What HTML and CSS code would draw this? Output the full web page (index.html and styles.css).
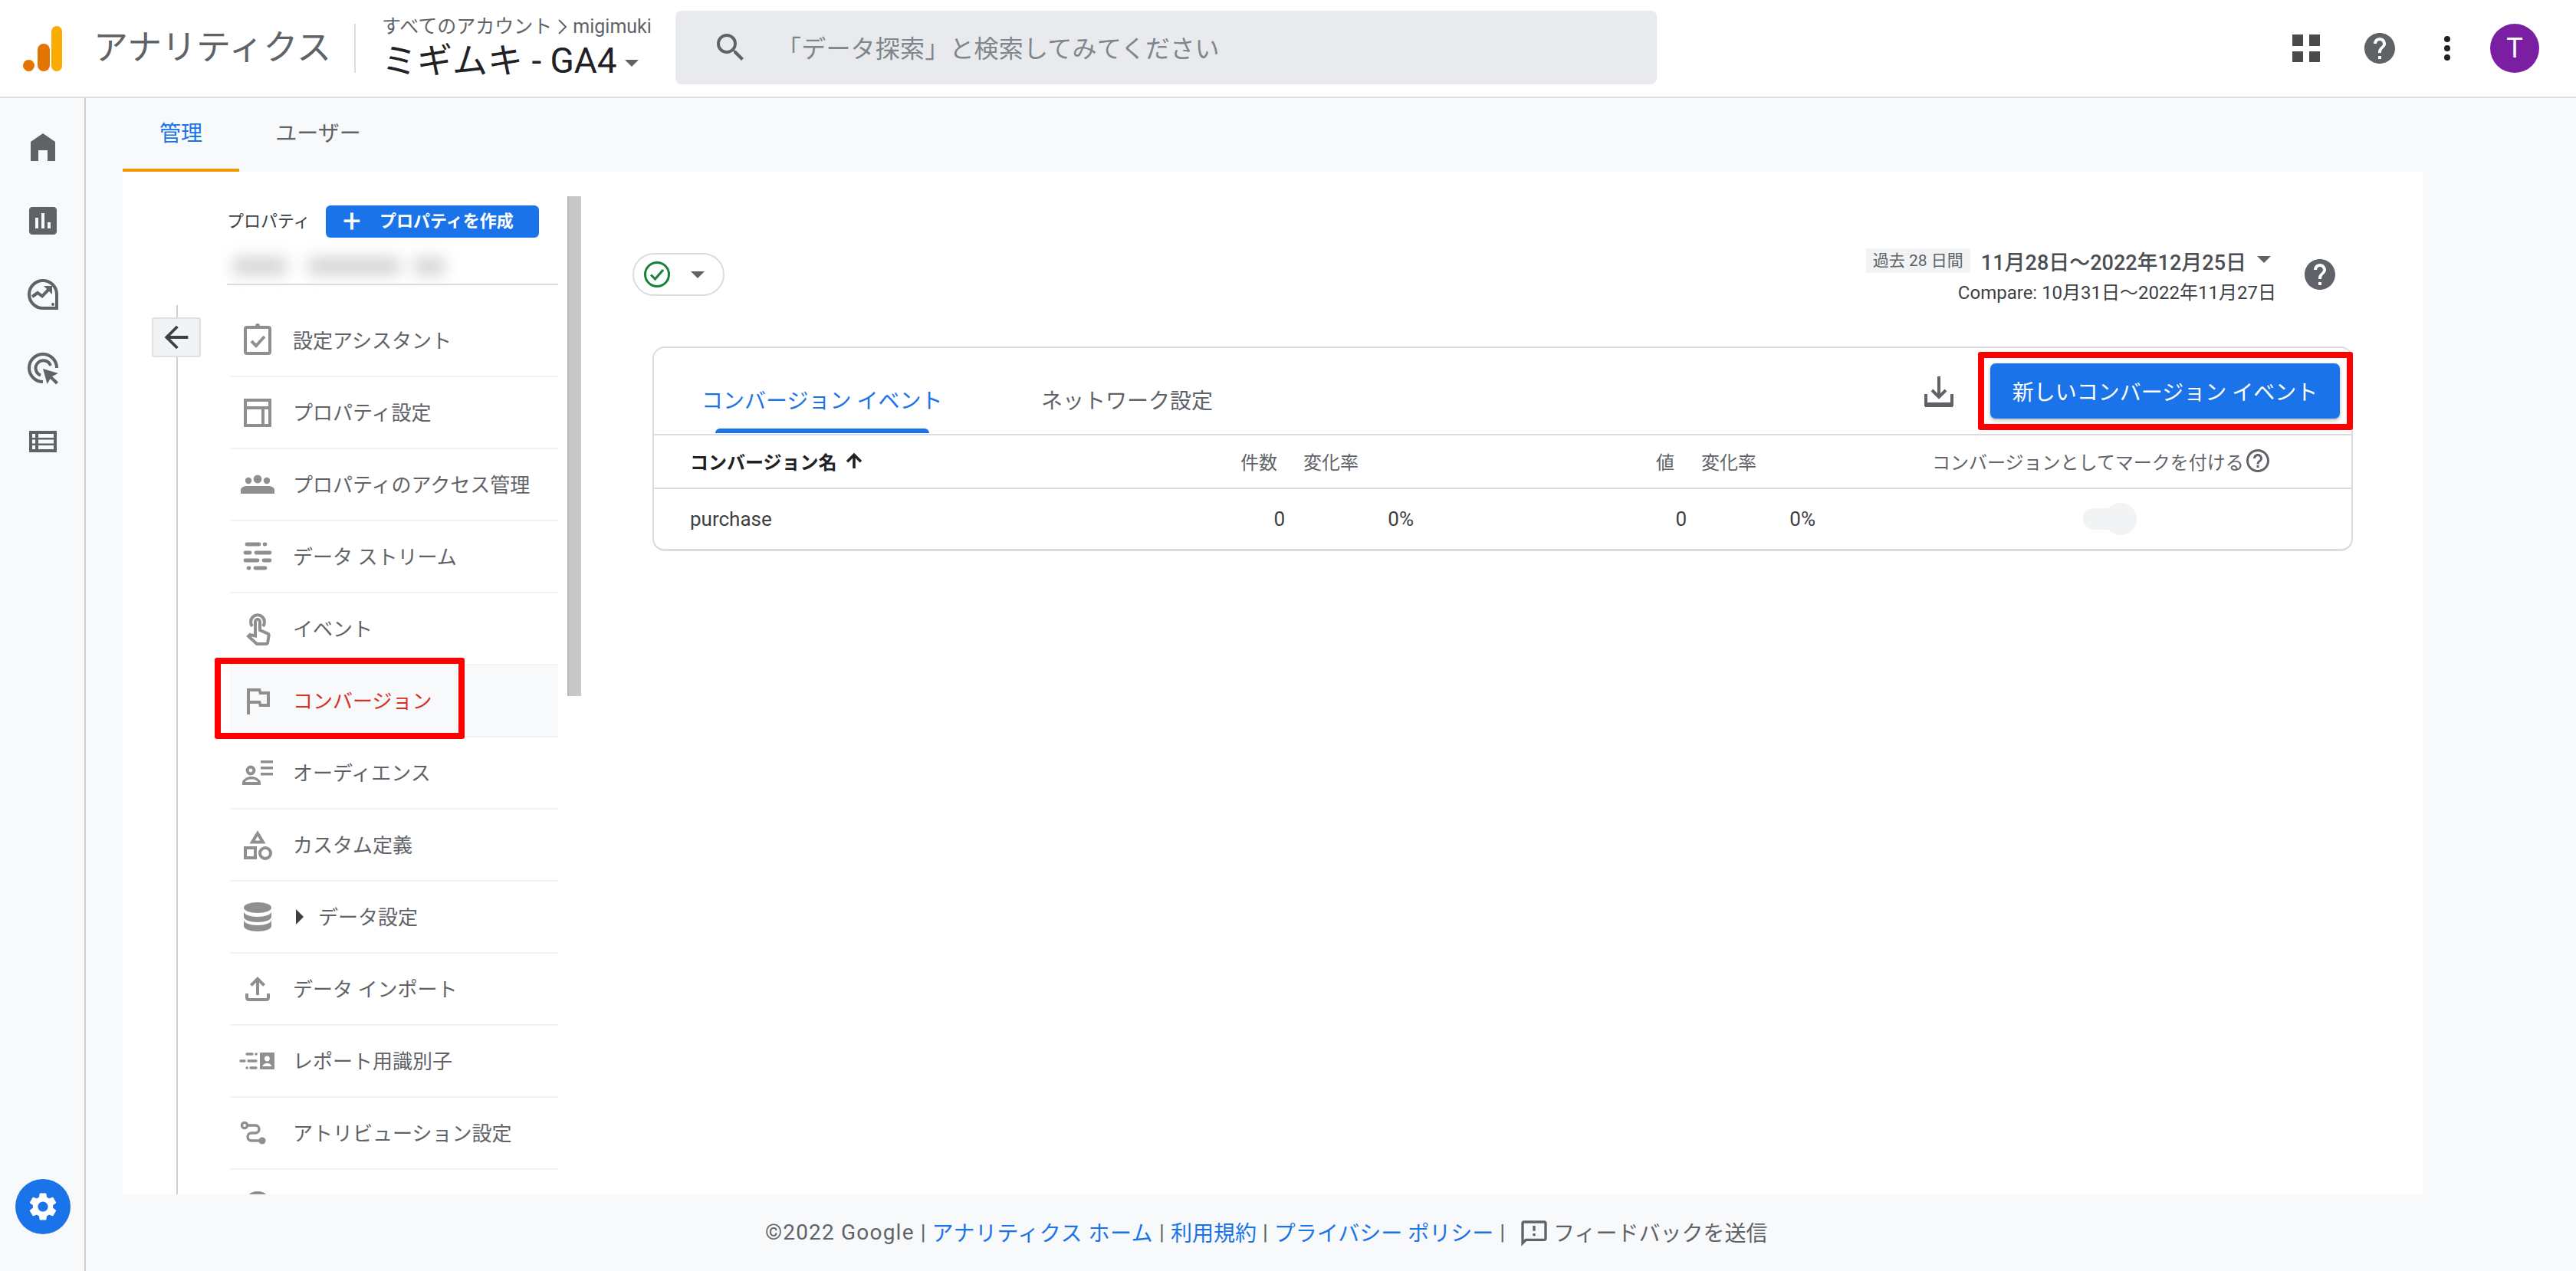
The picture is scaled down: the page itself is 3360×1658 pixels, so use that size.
FILE: index.html
```html
<!DOCTYPE html>
<html lang="ja">
<head>
  <meta charset="UTF-8">
  <meta name="viewport" content="width=device-width, initial-scale=1.0">
  <title>アナリティクス</title>
  <link rel="stylesheet" href="styles.css">
</head>
<body>

  <svg class="defs" width="0" height="0">
    <symbol id="help" viewBox="0 0 24 24"><path d="M12 2C6.48 2 2 6.48 2 12s4.48 10 10 10 10-4.48 10-10S17.52 2 12 2zm1 17h-2v-2h2v2zm2.07-7.75l-.9.92C13.45 12.9 13 13.5 13 15h-2v-.5c0-1.1.45-2.1 1.17-2.83l1.24-1.26c.37-.36.59-.86.59-1.41 0-1.1-.9-2-2-2s-2 .9-2 2H8c0-2.21 1.79-4 4-4s4 1.79 4 4c0 .88-.36 1.68-.93 2.25z"/></symbol>
  </svg>

  <header class="topbar">
    <div class="brand">
      <svg class="logo" width="51" height="59" viewBox="0 0 51 59">
        <circle cx="7.5" cy="51.5" r="7.5" fill="#e37400"/>
        <rect x="19" y="23" width="16" height="36" rx="8" fill="#e37400"/>
        <rect x="37" y="0" width="14" height="59" rx="7" fill="#f9ab00"/>
      </svg>
      <span class="brand-name">アナリティクス</span>
    </div>
    <div class="divider"></div>
    <div class="account">
      <div class="crumb">
        <span>すべてのアカウント</span>
        <svg class="crumb-sep" width="14" height="22" viewBox="0 0 14 22" fill="none" stroke="#5f6368" stroke-width="2"><path d="M2 2l9 9-9 9"/></svg>
        <span>migimuki</span>
      </div>
      <div class="property">ミギムキ - GA4<span class="caret caret-title"></span></div>
    </div>
    <div class="search">
      <svg class="search-icon" width="48" height="48" viewBox="0 0 24 24" fill="#5f6368"><path d="M15.5 14h-.79l-.28-.27A6.47 6.47 0 0 0 16 9.5 6.5 6.5 0 1 0 9.5 16c1.61 0 3.09-.59 4.23-1.57l.27.28v.79l5 4.99L20.49 19l-4.99-5zm-6 0C7.01 14 5 11.99 5 9.5S7.01 5 9.5 5 14 7.01 14 9.5 11.99 14 9.5 14z"/></svg>
      <span class="search-text">「データ探索」と検索してみてください</span>
    </div>
    <div class="top-actions">
      <svg class="apps" width="36" height="36" viewBox="0 0 36 36" fill="#4a4a4a">
        <rect width="14" height="15"/><rect x="22" width="14" height="15"/><rect y="22" width="14" height="14"/><rect x="22" y="22" width="14" height="14"/>
      </svg>
      <svg class="top-help" width="48" height="48" fill="#5f6368"><use href="#help"/></svg>
      <svg class="dots" width="8" height="32" viewBox="0 0 8 32" fill="#202124">
        <circle cx="4" cy="4" r="4"/><circle cx="4" cy="16" r="4"/><circle cx="4" cy="28" r="4"/>
      </svg>
      <div class="avatar">T</div>
    </div>
  </header>

  <div class="layout">
    <aside class="rail">
      <div class="rail-icon">
        <svg width="48" height="48" viewBox="0 0 24 24"><path d="M12 3L4 8.5V21h5v-7h6v7h5V8.5z"/></svg>
      </div>
      <div class="rail-icon">
        <svg width="48" height="48" viewBox="0 0 24 24"><path d="M19 3H5c-1.1 0-2 .9-2 2v14c0 1.100.9 2 2 2h14c1.100 0 2-.9 2-2V5c0-1.100-.9-2-2-2zM9 17H7v-7h2v7zm4 0h-2V7h2v10zm4 0h-2v-4h2v4z"/></svg>
      </div>
      <div class="rail-icon">
        <svg width="48" height="48" viewBox="0 0 24 24">
          <path d="M12 3a9 9 0 1 0 0 18h9v-9a9 9 0 0 0-9-9z" class="line"/>
          <path d="M5 13.500l3.500-2.500 3 2.200 5-5.200" class="line"/>
          <path d="M12.500 6.500h5.500V12z"/>
          <circle cx="18.500" cy="18.500" r="1"/>
        </svg>
      </div>
      <div class="rail-icon">
        <svg width="48" height="48" viewBox="0 0 24 24">
          <path d="M21 12a9 9 0 1 0-9 9" class="line"/>
          <path d="M17 10.500a5 5 0 1 0-6.500 6.300" class="line"/>
          <path d="M12 12.500l10 3-4 2 4 3.700-1.500 1.500-3.700-3.700-2 3.500z"/>
        </svg>
      </div>
      <div class="rail-icon">
        <svg width="36" height="28" viewBox="0 0 36 28"><path fill-rule="evenodd" d="M0 0h36v28H0zM4 4v5h4V4zM12 4v5h20V4zM4 11.500v5h4v-5zM12 11.500v5h20v-5zM4 19v5h4v-5zM12 19v5h20v-5z"/></svg>
      </div>
      <div class="gear">
        <svg width="44" height="44" viewBox="0 0 24 24" fill="#fff"><path d="M19.14 12.94c.04-.3.06-.61.06-.94 0-.32-.02-.64-.07-.94l2.030-1.580a.49.49 0 0 0 .12-.61l-1.920-3.320a.488.488 0 0 0-.59-.22l-2.390.96c-.5-.38-1.030-.7-1.620-.94l-.36-2.540a.484.484 0 0 0-.48-.41h-3.840c-.24 0-.43.17-.47.41l-.36 2.540c-.59.24-1.130.57-1.620.94l-2.390-.96c-.22-.08-.47 0-.59.22L2.740 8.870c-.12.21-.08.47.12.61l2.030 1.580c-.05.3-.09.63-.09.94s.02.64.07.94l-2.030 1.580a.49.49 0 0 0-.12.61l1.920 3.320c.12.22.37.29.59.22l2.390-.96c.5.38 1.030.7 1.620.94l.36 2.540c.05.24.24.41.48.41h3.840c.24 0 .44-.17.47-.41l.36-2.540c.59-.24 1.130-.56 1.620-.94l2.390.96c.22.08.47 0 .59-.22l1.920-3.320c.12-.22.07-.47-.12-.61l-2.010-1.580zM12 15.600c-1.980 0-3.600-1.620-3.600-3.600s1.620-3.600 3.600-3.600 3.600 1.620 3.600 3.600-1.620 3.600-3.600 3.600z"/></svg>
      </div>
    </aside>

    <main class="main">
      <nav class="page-tabs">
        <div class="page-tab active">管理</div>
        <div class="page-tab user-tab">ユーザー</div>
      </nav>

      <div class="panel">
        <div class="nav">
          <div class="nav-side">
            <div class="tree-line"></div>
            <div class="back-btn">
              <svg width="46" height="46" viewBox="0 0 24 24" fill="#3c4043"><path d="M20 11H7.830l5.590-5.590L12 4l-8 8 8 8 1.410-1.410L7.830 13H20v-2z"/></svg>
            </div>
          </div>
          <div class="nav-list">
            <div class="nav-head">
              <span class="nav-head-label">プロパティ</span>
              <div class="create-btn"><span class="plus">+</span>プロパティを作成</div>
            </div>
            <div class="blurred">
              <span class="blob blob-a"></span><span class="blob blob-b"></span><span class="blob blob-c"></span>
            </div>

            <div class="nav-rows">
              <div class="nav-row">
                <svg class="nav-icon" viewBox="0 0 24 24"><rect x="4" y="3.500" width="16" height="17" rx="1" class="line"/><circle cx="12" cy="2.500" r="1.500"/><path d="M8 12.500l3 3 5.500-6" class="line"/></svg>
                <span>設定アシスタント</span>
              </div>
              <div class="nav-row">
                <svg class="nav-icon" viewBox="0 0 24 24"><rect x="4" y="4" width="16" height="16.500" class="line"/><path d="M4 9h16M15.500 9v11" class="line"/></svg>
                <span>プロパティ設定</span>
              </div>
              <div class="nav-row">
                <svg class="nav-icon" viewBox="0 0 24 24"><circle cx="6" cy="9.500" r="2.100"/><circle cx="12" cy="8.500" r="2.700"/><circle cx="18" cy="9.500" r="2.100"/><path d="M1 18v-2.500c0-1.500 2-2.500 4.500-2.500h13c2.500 0 4.500 1 4.500 2.500V18z"/></svg>
                <span>プロパティのアクセス管理</span>
              </div>
              <div class="nav-row">
                <svg class="nav-icon" viewBox="0 0 24 24"><path d="M5 4h8M16.500 4h.5M4 9.500h3M11 9.500h9M4 14.500h8M16 14.500h4M6 19.500h.5M10.500 19.500h6.500" class="line round"/></svg>
                <span>データ ストリーム</span>
              </div>
              <div class="nav-row">
                <svg class="nav-icon" viewBox="0 0 24 24"><path d="M8.500 10.500a4.500 4.500 0 1 1 7 0" class="line"/><path d="M10.500 7.500a1.500 1.500 0 0 1 3 0v5.500l5 2.200c.6.3.9.8.8 1.400l-.7 4.400c-.1.6-.6 1-1.200 1H11.500L6 17l1-1 3.500.8z" class="line"/></svg>
                <span>イベント</span>
              </div>
              <div class="nav-row current">
                <svg class="nav-icon" viewBox="0 0 24 24"><path d="M14.400 6L14 4H5v17h2v-7h5.600l.4 2h7V6h-5.600zM18 14h-3.600l-.4-2H7V6h5.600l.4 2h5v6z"/></svg>
                <span>コンバージョン</span>
                <div class="red-box red-box-nav"></div>
              </div>
              <div class="nav-row">
                <svg class="nav-icon" viewBox="0 0 24 24"><path d="M14 4h8v1.700h-8zM14 8h8v1.700h-8zM14 12h8v1.700h-8z"/><circle cx="7.500" cy="10.500" r="2.200" class="line"/><path fill-rule="evenodd" d="M2 20v-1.500c0-2.300 3.500-4 6-4s6 1.700 6 4V20zM4 18h8c-.3-1-2.300-1.700-4-1.700S4.300 17 4 18z"/></svg>
                <span>オーディエンス</span>
              </div>
              <div class="nav-row">
                <svg class="nav-icon" viewBox="0 0 24 24"><path d="M12 4.500l3.500 5.700h-7z" class="line"/><rect x="4" y="14" width="6.500" height="6.500" class="line"/><circle cx="17" cy="17.500" r="3.500" class="line"/></svg>
                <span>カスタム定義</span>
              </div>
              <div class="nav-row">
                <svg class="nav-icon" viewBox="0 0 24 24"><ellipse cx="12" cy="6" rx="9" ry="3.500"/><path d="M3 8.500c0 2 4 3.500 9 3.500s9-1.500 9-3.500V12c0 2-4 3.500-9 3.500S3 14 3 12z"/><path d="M3 14c0 2 4 3.500 9 3.500s9-1.500 9-3.500v4c0 2-4 3.500-9 3.500S3 20 3 18z"/></svg>
                <span class="tri"></span><span>データ設定</span>
              </div>
              <div class="nav-row">
                <svg class="nav-icon" viewBox="0 0 24 24"><path d="M18 15v3H6v-3H4v3c0 1.100.9 2 2 2h12c1.100 0 2-.9 2-2v-3h-2zM7 9l1.410 1.410L11 7.830V16h2V7.830l2.590 2.580L17 9l-5-5-5 5z"/></svg>
                <span>データ インポート</span>
              </div>
              <div class="nav-row">
                <svg class="nav-icon" viewBox="0 0 24 24"><path fill-rule="evenodd" d="M14 6.500h8.500c.3 0 .5.200.5.500v10c0 .3-.2.500-.5.500H14c-.3 0-.5-.2-.5-.5V7c0-.3.200-.5.500-.5zM18.200 8.800a1.700 1.700 0 1 0 0 3.400 1.700 1.700 0 0 0 0-3.400zM15.300 15.500h5.800c0-1.300-1.800-2-2.900-2s-2.900.7-2.900 2z"/><path d="M5 7.500h3.500M11 7.500h.1M1 12h2.500M6 12h5M5 16.500h.1M7.500 16.500h3.500" class="line round thin"/></svg>
                <span>レポート用識別子</span>
              </div>
              <div class="nav-row">
                <svg class="nav-icon" viewBox="0 0 24 24"><circle cx="3.500" cy="7" r="1.800" class="line thin"/><path d="M5.500 7h5a2.500 2.500 0 0 1 0 5H8a2.500 2.500 0 0 0 0 5h6" class="line thin"/><circle cx="15" cy="17" r="2.300"/></svg>
                <span>アトリビューション設定</span>
              </div>
              <div class="nav-row">
                <svg class="nav-icon" viewBox="0 0 24 24"><circle cx="12" cy="12" r="9"/></svg>
              </div>
            </div>
          </div>
          <div class="scrollbar"></div>
        </div>

        <div class="content">
          <div class="content-top">
            <div class="status-pill">
              <svg width="36" height="36" viewBox="0 0 36 36" fill="none" stroke="#188038" stroke-width="3"><circle cx="18" cy="18" r="15.500"/><path d="M10 18.500l5.500 5.500L26 12"/></svg>
              <span class="caret"></span>
            </div>
            <div class="date-area">
              <div class="date-block">
                <div class="date-main">
                  <span class="date-badge">過去 28 日間</span>
                  <span class="date-range">11月28日〜2022年12月25日</span>
                  <span class="caret caret-date"></span>
                </div>
                <div class="date-compare">Compare: 10月31日〜2022年11月27日</div>
              </div>
              <svg class="date-help" width="48" height="48" fill="#5f6368"><use href="#help"/></svg>
            </div>
          </div>

          <section class="card">
            <div class="card-head">
              <div class="card-tab active">
                <span>コンバージョン イベント</span>
                <div class="card-tab-line"></div>
              </div>
              <div class="card-tab">
                <span>ネットワーク設定</span>
                <div class="card-tab-line hidden"></div>
              </div>
              <svg class="download" width="48" height="48" viewBox="0 0 24 24" fill="none" stroke="#5f6368" stroke-width="2"><path d="M3.500 14v7h17v-7"/><path d="M3 21h18" stroke-width="3"/><path d="M12 2.500V16M7.500 11.500L12 16l4.500-4.500"/></svg>
              <div class="new-btn-wrap">
                <button class="new-btn">新しいコンバージョン イベント</button>
              </div>
            </div>

            <div class="table-row table-head">
              <div class="cell-name sorted">コンバージョン名
                <svg width="28" height="28" viewBox="0 0 24 24" fill="#202124" stroke="#202124"><path d="M4 12l1.410 1.410L11 7.830V20h2V7.830l5.580 5.590L20 12l-8-8-8 8z"/></svg>
              </div>
              <div class="cell-count head-count">件数</div>
              <div class="cell-change head-change">変化率</div>
              <div class="cell-value head-value">値</div>
              <div class="cell-change2 head-change2">変化率</div>
              <div class="cell-mark head-mark">コンバージョンとしてマークを付ける
                <svg width="36" height="36" viewBox="0 0 24 24" fill="#5f6368"><path d="M11 18h2v-2h-2v2zm1-16C6.480 2 2 6.480 2 12s4.480 10 10 10 10-4.480 10-10S17.520 2 12 2zm0 18c-4.410 0-8-3.590-8-8s3.590-8 8-8 8 3.590 8 8-3.590 8-8 8zm0-14c-2.210 0-4 1.790-4 4h2c0-1.100.9-2 2-2s2 .9 2 2c0 2-3 1.750-3 5h2c0-2.250 3-2.500 3-5 0-2.210-1.790-4-4-4z"/></svg>
              </div>
            </div>
            <div class="table-row table-body">
              <div class="cell-name">purchase</div>
              <div class="cell-count">0</div>
              <div class="cell-change">0%</div>
              <div class="cell-value">0</div>
              <div class="cell-change2">0%</div>
              <div class="cell-mark">
                <div class="toggle"><span class="toggle-thumb"></span></div>
              </div>
            </div>
          </section>
        </div>
      </div>

      <footer class="footer">
        <span class="copyright">©2022 Google</span><span class="sep">|</span><a class="home-link">アナリティクス ホーム</a><span class="sep">|</span><a>利用規約</a><span class="sep">|</span><a>プライバシー ポリシー</a><span class="sep">|</span>
        <svg class="feedback-icon" width="40" height="40" viewBox="0 0 24 24" fill="#5f6368"><path d="M20 2H4c-1.100 0-2 .9-2 2v18l4-4h14c1.100 0 2-.9 2-2V4c0-1.100-.9-2-2-2zm0 14H5.170L4 17.170V4h16v12zM11 12h2v2h-2zm0-6h2v4h-2z"/></svg>
        <span>フィードバックを送信</span>
      </footer>
    </main>
  </div>

</body>
</html>
```

FILE: styles.css
```css
* {
  box-sizing: border-box;
}

html, body {
  margin: 0;
  height: 100%;
}

body {
  width: 3360px;
  height: 1658px;
  overflow: hidden;
  background-color: #f8f9fa;
  color: #5f6368;
  font-family: Roboto, "Noto Sans CJK JP", sans-serif;
  font-size: 26px;
}

.defs {
  display: block;
  height: 0;
}

.line {
  fill: none;
  stroke-width: 2;
}

.round {
  stroke-linecap: round;
  stroke-width: 2.400;
}

.thin {
  stroke-width: 1.700;
}

/* top bar */
.topbar {
  height: 128px;
  display: flex;
  align-items: center;
  padding-left: 30px;
  background-color: #fff;
  border-bottom: 2px solid #dadce0;
}

.brand {
  width: 432px;
  display: flex;
  align-items: center;
}

.logo {
  margin-right: 41px;
}

.brand-name {
  font-size: 45px;
  line-height: 60px;
  color: #5f6368;
}

.divider {
  width: 2px;
  height: 64px;
  margin-right: 34px;
  background-color: #dadce0;
}

.account {
  width: 383px;
}

.crumb {
  display: flex;
  align-items: center;
  padding-top: 2px;
  font-size: 25px;
  line-height: 28px;
  color: #5f6368;
  white-space: nowrap;
}

.crumb-sep {
  margin-left: 7px;
  margin-right: 6px;
}

.property {
  display: flex;
  align-items: center;
  margin-top: 2px;
  font-size: 46px;
  line-height: 56px;
  color: #202124;
  white-space: nowrap;
}

.caret {
  display: inline-block;
  width: 0;
  height: 0;
  border-left: 9px solid transparent;
  border-right: 9px solid transparent;
  border-top: 9px solid #5f6368;
}

.caret-title {
  margin-left: 10px;
  margin-top: 6px;
}

.search {
  width: 1280px;
  height: 96px;
  display: flex;
  align-items: center;
  padding-left: 48px;
  background-color: #e8eaed;
  border-radius: 8px;
  margin-top: -2px;
}

.search-text {
  margin-left: 36px;
  padding-bottom: 3px;
  font-size: 32px;
  letter-spacing: 0.2px;
  color: #80868b;
}

.top-actions {
  margin-left: auto;
  padding-right: 48px;
  display: flex;
  align-items: center;
}

.apps {
  margin-right: 54px;
}

.top-help {
  margin-right: 60px;
}

.dots {
  margin-right: 52px;
}

.avatar {
  width: 64px;
  height: 64px;
  border-radius: 50%;
  background-color: #7b1fa2;
  color: #fff;
  font-size: 36px;
  line-height: 64px;
  text-align: center;
}

/* page below the top bar */
.layout {
  height: 1530px;
  display: flex;
}

.rail {
  width: 112px;
  flex-shrink: 0;
  display: flex;
  flex-direction: column;
  align-items: center;
  padding-top: 16px;
  padding-left: 2px;
  padding-bottom: 48px;
  border-right: 2px solid #d0d0d0;
}

.rail-icon {
  height: 96px;
  display: flex;
  align-items: center;
  justify-content: center;
}

.rail-icon svg {
  fill: #5f6368;
  stroke: #5f6368;
  stroke-width: 0;
}

.rail-icon .line {
  stroke-width: 2;
}

.gear {
  margin-top: auto;
  width: 72px;
  height: 72px;
  border-radius: 50%;
  background-color: #1a73e8;
  display: flex;
  align-items: center;
  justify-content: center;
}

.main {
  flex: 1;
  padding-left: 48px;
  display: flex;
  flex-direction: column;
}

.page-tabs {
  height: 96px;
  display: flex;
}

.page-tab {
  width: 152px;
  padding-top: 27px;
  text-align: center;
  font-size: 28px;
  line-height: 40px;
  color: #5f6368;
  border-bottom: 4px solid transparent;
}

.page-tab.active {
  color: #1a73e8;
  border-bottom-color: #f29900;
}

.user-tab {
  margin-left: 27px;
}

.panel {
  width: 3000px;
  height: 1334px;
  display: flex;
  background-color: #fff;
  overflow: hidden;
}

/* admin nav */
.nav {
  width: 598px;
  flex-shrink: 0;
  display: flex;
  position: relative;
}

.nav-side {
  width: 140px;
  padding-top: 174px;
  position: relative;
}

.tree-line {
  width: 2px;
  height: 100%;
  margin-left: 70px;
  background-color: #cfcfcf;
}

.back-btn {
  position: absolute;
  left: 38px;
  top: 190px;
  width: 64px;
  height: 52px;
  display: flex;
  align-items: center;
  justify-content: center;
  background-color: #f1f3f4;
  border: 2px solid #e0e0e0;
  border-radius: 3px;
}

.nav-list {
  width: 428px;
}

.nav-head {
  height: 86px;
  padding-top: 43px;
  display: flex;
  align-items: center;
  margin-left: -4px;
}

.nav-head-label {
  width: 129px;
  font-size: 22px;
  line-height: 42px;
  color: #3c4043;
}

.create-btn {
  width: 278px;
  height: 42px;
  display: flex;
  align-items: center;
  padding-left: 22px;
  background-color: #1a73e8;
  border-radius: 6px;
  color: #fff;
  font-size: 22px;
  font-weight: 700;
  line-height: 42px;
}

.plus {
  width: 48px;
  font-size: 42px;
  font-weight: 400;
  line-height: 42px;
}

.blurred {
  height: 62px;
  width: 432px;
  padding-top: 26px;
  margin-left: -4px;
  display: flex;
  border-bottom: 2px solid #dadce0;
}

.blob {
  height: 22px;
  background-color: #d2d2d2;
  filter: blur(10px);
}

.blob-a {
  width: 70px;
  margin-left: 8px;
}

.blob-b {
  width: 120px;
  margin-left: 28px;
}

.blob-c {
  width: 40px;
  margin-left: 18px;
}

.nav-rows {
  margin-top: 26px;
}

.nav-row {
  height: 94px;
  display: flex;
  align-items: center;
  position: relative;
  padding-left: 12px;
  border-bottom: 2px solid #f1f3f4;
  color: #5f6368;
  font-size: 26px;
  white-space: nowrap;
}

.nav-row span:not(.tri) {
  padding-bottom: 4px;
}

.nav-row.current {
  background-color: #f8f9fa;
  color: #d93025;
}

.nav-icon {
  width: 48px;
  height: 48px;
  margin-right: 22px;
  flex-shrink: 0;
  fill: #8f8f8f;
  stroke: #8f8f8f;
  stroke-width: 0;
}

.nav-icon .line {
  stroke-width: 2;
}

.nav-icon .round {
  stroke-width: 2.400;
}

.nav-icon .thin {
  stroke-width: 1.700;
}

.tri {
  width: 0;
  height: 0;
  margin-left: 4px;
  margin-right: 19px;
  border-top: 10px solid transparent;
  border-bottom: 10px solid transparent;
  border-left: 10px solid #3c4043;
}

.red-box {
  position: absolute;
  border: 8px solid #ff0000;
  border-radius: 3px;
  pointer-events: none;
}

.red-box-nav {
  left: -20px;
  top: -10px;
  width: 326px;
  height: 106px;
}

.scrollbar {
  position: absolute;
  left: 580px;
  top: 32px;
  width: 18px;
  height: 652px;
  background-color: #c8c8c8;
  border-left: 2px solid #b8b8b8;
}

/* conversions content */
.content {
  flex: 1;
  padding-left: 93px;
  padding-right: 91px;
}

.content-top {
  height: 228px;
  padding-top: 100px;
  display: flex;
  justify-content: space-between;
  align-items: flex-start;
}

.status-pill {
  width: 120px;
  height: 56px;
  margin-left: -26px;
  margin-top: 6px;
  display: flex;
  align-items: center;
  padding-left: 12px;
  border: 2px solid #dadce0;
  border-radius: 28px;
}

.status-pill .caret {
  margin-left: 26px;
}

.date-area {
  display: flex;
  align-items: flex-start;
  margin-right: 19px;
}

.date-block {
  display: flex;
  flex-direction: column;
  align-items: flex-end;
}

.date-main {
  height: 32px;
  display: flex;
  align-items: center;
  margin-right: 7px;
}

.date-badge {
  height: 32px;
  padding: 0 9px;
  background-color: #f1f3f4;
  color: #5f6368;
  font-size: 21px;
  line-height: 32px;
}

.date-range {
  margin-left: 14px;
  font-size: 27px;
  font-weight: 500;
  color: #4a4d51;
}

.caret-date {
  margin-left: 14px;
  margin-top: -4px;
}

.date-compare {
  margin-top: 12px;
  font-size: 24px;
  line-height: 28px;
  color: #3c4043;
}

.date-help {
  margin-left: 33px;
  margin-top: 10px;
}

.card {
  height: 267px;
  background-color: #fff;
  border: 2px solid #dadce0;
  border-bottom-width: 3px;
  border-radius: 16px;
}

.card-head {
  height: 114px;
  display: flex;
  align-items: flex-end;
  padding-left: 62px;
  padding-bottom: 1px;
  border-bottom: 2px solid #dadce0;
}

.card-tab {
  display: flex;
  flex-direction: column;
  align-items: center;
  font-size: 28px;
  line-height: 40px;
  color: #5f6368;
  margin-right: 101px;
  white-space: nowrap;
}

.card-tab.active {
  color: #1a73e8;
}

.card-tab-line {
  width: 279px;
  height: 6px;
  margin-top: 15px;
  background-color: #1a73e8;
  border-radius: 6px 6px 0 0;
}

.card-tab-line.hidden {
  visibility: hidden;
}

.download {
  margin-left: auto;
  margin-bottom: 31px;
}

.new-btn-wrap {
  position: relative;
  align-self: flex-start;
  margin-top: 20px;
  margin-left: 43px;
  margin-right: 15px;
}

.new-btn-wrap::after {
  content: "";
  position: absolute;
  left: -16px;
  right: -17px;
  top: -15px;
  bottom: -15px;
  border: 8px solid #ff0000;
  border-radius: 3px;
}

.new-btn {
  display: block;
  width: 456px;
  height: 72px;
  padding: 0;
  border: 0;
  border-radius: 7px;
  background-color: #1a73e8;
  box-shadow: 0 2px 4px rgba(60, 64, 67, 0.4);
  color: #fff;
  font-family: Roboto, "Noto Sans CJK JP", sans-serif;
  font-size: 28px;
}

.table-row {
  display: grid;
  grid-template-columns: 657px 170px 170px 355px 170px 692px;
  align-items: center;
}

.table-head {
  height: 70px;
  padding-bottom: 2px;
  border-bottom: 2px solid #dadce0;
  font-size: 24px;
  color: #5f6368;
}

.table-body {
  height: 78px;
  font-size: 26px;
  color: #3c4043;
}

.cell-name {
  padding-left: 47px;
}

.sorted {
  display: flex;
  align-items: center;
  gap: 8px;
  color: #202124;
  font-weight: 700;
}

.cell-count,
.cell-change,
.cell-value,
.cell-change2 {
  text-align: right;
}

.table-body .cell-count {
  padding-right: 4px;
}

.table-body .cell-change {
  padding-right: 6px;
}

.table-body .cell-value {
  padding-right: 5px;
}

.table-body .cell-change2 {
  padding-right: 7px;
}

.head-count {
  padding-right: 14px;
}

.head-change {
  padding-left: 20px;
  text-align: left;
}

.head-value {
  padding-right: 21px;
}

.head-change2 {
  padding-left: 14px;
  text-align: left;
}

.cell-mark {
  padding-left: 145px;
}

.head-mark {
  display: flex;
  align-items: center;
  white-space: nowrap;
}

.table-body .cell-mark {
  padding-left: 342px;
}

.toggle {
  width: 70px;
  height: 42px;
  display: flex;
  align-items: center;
}

.toggle::before {
  content: "";
  width: 49px;
  height: 28px;
  background-color: #f1f3f4;
  border-radius: 14px;
}

.toggle-thumb {
  width: 42px;
  height: 42px;
  margin-left: -21px;
  border-radius: 50%;
  background-color: #f1f3f4;
}

/* footer */
.footer {
  flex: 1;
  display: flex;
  align-items: center;
  padding-left: 838px;
  padding-bottom: 2px;
  font-size: 28px;
  color: #5f6368;
  white-space: pre;
}

.footer a {
  color: #1a73e8;
}

.copyright {
  letter-spacing: 1.200px;
}

.home-link {
  letter-spacing: 0.500px;
}

.sep {
  margin: 0 8px;
}

.feedback-icon {
  margin-left: 10px;
  margin-right: 5px;
  margin-top: 4px;
}
```
